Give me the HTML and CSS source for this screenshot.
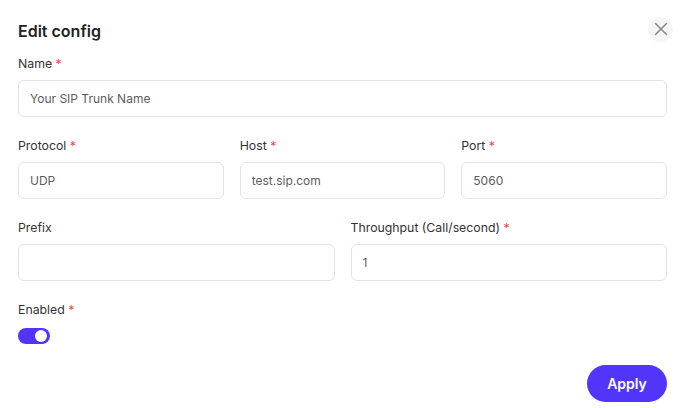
FILE: index.html
```html
<!DOCTYPE html>
<html lang="en">
<head>
    <meta charset="UTF-8">
    <meta name="viewport" content="width=device-width, initial-scale=1.0">
    <title>Edit config</title>
    <link rel="stylesheet" href="styles.css">
</head>
<body>
    <div class="modal">
        <div class="modal-header">
            <h2>Edit config</h2>
            <button class="close-btn" aria-label="Close">
                <svg width="14" height="14" viewBox="0 0 14 14"><path d="M1.5 1.5L12.5 12.5M12.5 1.5L1.5 12.5" stroke="#8a8a8a" stroke-width="1.6" stroke-linecap="round"/></svg>
            </button>
        </div>

        <div class="field">
            <label>Name <span class="req">*</span></label>
            <input type="text" placeholder="Your SIP Trunk Name">
        </div>

        <div class="row cols-3">
            <div class="field">
                <label>Protocol <span class="req">*</span></label>
                <input type="text" value="UDP">
            </div>
            <div class="field">
                <label>Host <span class="req">*</span></label>
                <input type="text" value="test.sip.com">
            </div>
            <div class="field">
                <label>Port <span class="req">*</span></label>
                <input type="text" value="5060">
            </div>
        </div>

        <div class="row cols-2">
            <div class="field">
                <label>Prefix</label>
                <input type="text">
            </div>
            <div class="field">
                <label>Throughput (Call/second) <span class="req">*</span></label>
                <input type="text" value="1">
            </div>
        </div>

        <div class="field">
            <label>Enabled <span class="req">*</span></label>
            <span class="toggle on"><span class="knob"></span></span>
        </div>

        <div class="footer">
            <button class="apply-btn">Apply</button>
        </div>
    </div>
</body>
</html>
```

FILE: styles.css
```css
* { box-sizing: border-box; }
body { margin: 0; background: #fff; font-family: Inter, "Noto Sans", sans-serif; color: #262626; }
.modal { width: 687px; padding: 15px 20px 0 18px; }
.modal-header { display: flex; justify-content: space-between; align-items: center; height: 27px; margin-bottom: 14px; }
.modal-header h2 { margin: 0; font-size: 16px; font-weight: 600; color: #222; padding-top: 4px; }
.close-btn { width: 25px; height: 25px; border-radius: 50%; border: none; background: #f5f5f5; display: flex; align-items: center; justify-content: center; padding: 0; margin-right: -6px; margin-top: 1px; cursor: pointer; }
.field { display: flex; flex-direction: column; margin-bottom: 21px; min-width: 0; }
.field label { font-size: 12.3px; font-weight: 400; color: #333; height: 16px; line-height: 16px; margin-bottom: 8px; }
.req { color: #f04848; }
.field input { width: 100%; height: 37px; border: 1px solid #e3e3e3; border-radius: 6px; padding: 0 11px; font-family: inherit; font-size: 12px; color: #5c5c5c; outline: none; }
.field input::placeholder { color: #5c5c5c; }
.row { display: grid; gap: 16px; }
.cols-3 { grid-template-columns: repeat(3, minmax(0, 1fr)); }
.cols-2 { grid-template-columns: repeat(2, minmax(0, 1fr)); }
.toggle { width: 32px; height: 16px; border-radius: 8px; background: #5235fb; position: relative; display: block; margin-top: 2px; }
.knob { position: absolute; top: 2px; right: 3px; width: 12px; height: 12px; border-radius: 50%; background: #fff; }
.footer { display: flex; justify-content: flex-end; margin-top: 1px; }
.apply-btn { width: 80px; height: 37px; border: none; border-radius: 19px; background: #5235fb; color: #fff; font-family: inherit; font-size: 14px; font-weight: 600; cursor: pointer; }
```
